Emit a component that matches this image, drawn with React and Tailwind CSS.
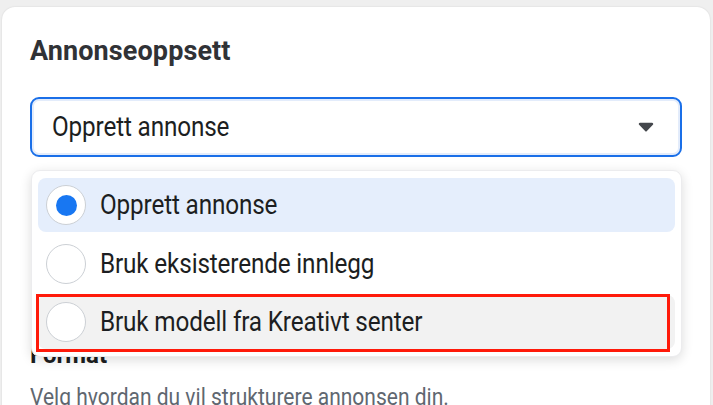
import React from "react";

function Radio({ checked }) {
  return (
    <div className="w-[40px] h-[40px] shrink-0 rounded-full bg-white border-[1.5px] border-[#ccd0d5] flex items-center justify-center">
      {checked && <div className="w-[21px] h-[21px] rounded-full bg-[#1877f2]" />}
    </div>
  );
}

function Item({ label, checked, bg }) {
  return (
    <div className={`h-[54px] rounded-[8px] pl-[8px] flex items-center gap-[14px] ${bg}`}>
      <Radio checked={checked} />
      <span className="inline-block text-[24.3px] leading-[30px] text-[#1c1e21] tracking-[-0.15px] scale-y-[1.12] origin-left">{label}</span>
    </div>
  );
}

export default function App() {
  return (
    <div className="w-[713px] h-[405px] overflow-hidden bg-[#efefef] pt-[7px] pl-[2px] pr-[3px] font-['Roboto','Liberation_Sans',sans-serif]">
      <div className="relative h-[430px] bg-white rounded-t-[13px] shadow-[0_0_2px_rgba(0,0,0,0.12)] px-[28px] pt-[28px]">
        <h2 className="text-[27px] leading-[32px] font-bold text-[#303236] tracking-[0.1px]">Annonseoppsett</h2>
        <div className="mt-[30px] h-[60px] rounded-[9px] border-2 border-[#1a6fe8] shadow-[inset_0_0_0_2px_#e3ecfb] pl-[20px] pr-[26px] flex items-center justify-between">
          <span className="inline-block text-[24.3px] leading-[30px] text-[#1c1e21] tracking-[-0.15px] scale-y-[1.12]">Opprett annonse</span>
          <svg width="16" height="10" viewBox="0 0 16 10">
            <path d="M2 0.8 H14 A1.2 1.2 0 0 1 14.9 2.8 L8.9 9 A1.2 1.2 0 0 1 7.1 9 L1.1 2.8 A1.2 1.2 0 0 1 2 0.8 Z" fill="#44474c" />
          </svg>
        </div>
        <div className="mt-[183px] text-[24px] leading-[30px] font-bold text-[#1c1e21]">Format</div>
        <p className="mt-[12px] text-[21px] leading-[28px] text-[#606770] scale-y-[1.1] origin-top-left">Velg hvordan du vil strukturere annonsen din.</p>

        <div className="absolute top-[163px] left-[29px] w-[651px] h-[187px] bg-white rounded-[9px] border border-[#ececee] shadow-[0_3px_12px_rgba(0,0,0,0.14)] px-[6px] pt-[7px] flex flex-col gap-[4.5px]">
          <Item label="Opprett annonse" checked bg="bg-[#e5eefc]" />
          <Item label="Bruk eksisterende innlegg" bg="bg-white" />
          <Item label="Bruk modell fra Kreativt senter" bg="bg-[#f2f2f2]" />
          <div className="absolute left-[4px] top-[123px] w-[634px] h-[58px] border-[3px] border-[#ff1a0a]" />
        </div>
      </div>
    </div>
  );
}
